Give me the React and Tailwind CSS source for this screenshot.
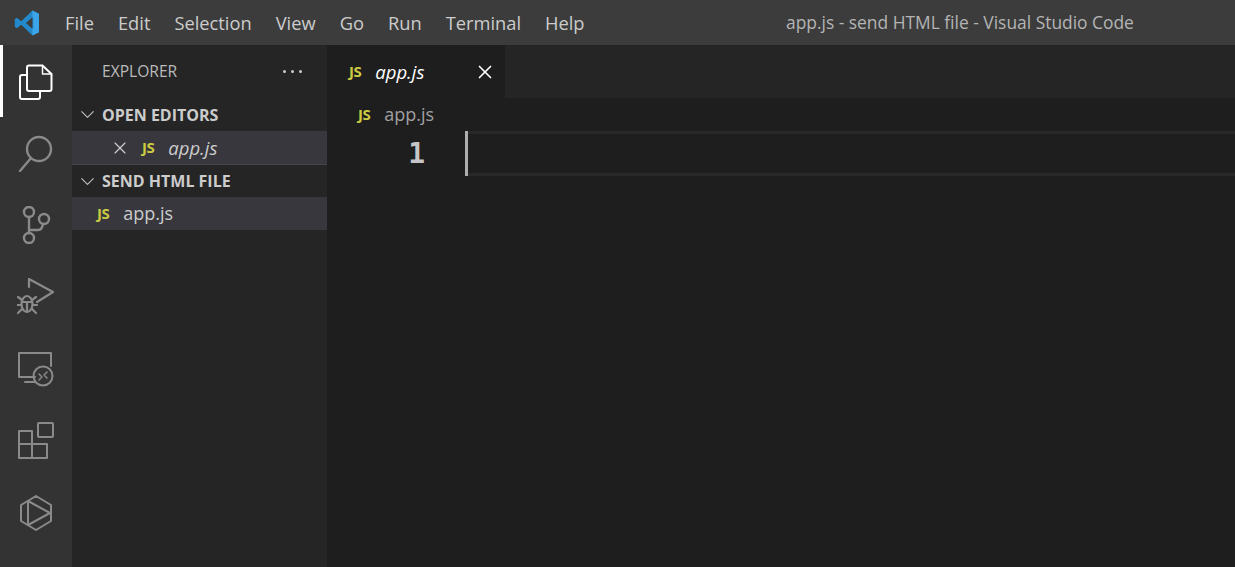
import { X, ChevronDown } from 'lucide-react';

const FONT = "font-['Open_Sans','Noto_Sans',sans-serif]";

function JsBadge({ className = '' }) {
  return <span className={`text-[15px] font-bold leading-none text-[#cbcb41] tracking-[-0.5px] ${className}`}>JS</span>;
}

function Logo() {
  return (
    <svg width="26" height="26" viewBox="0 0 100 100">
      <path d="M71 2 L96 14 V86 L71 98 L28 57 L11 70 L3 65 V35 L11 30 L28 43 Z M71 28 L46 50 L71 72 Z" fill="#2489ca" fillRule="evenodd" />
      <path d="M71 2 L96 14 V86 L71 98 Z M71 28 V72 L74 70 V30 Z" fill="#3ca5ea" fillRule="evenodd" />
    </svg>
  );
}

const stroke = { fill: 'none', strokeWidth: 2, strokeLinejoin: 'round', strokeLinecap: 'round' };

function FilesIcon() {
  return (
    <svg width="36" height="38" viewBox="0 0 36 38" stroke="#ffffff" {...stroke}>
      <path d="M11 3.5 H24.5 L33.5 12 V27 Q33.500 29 31.500 29 H11 Q9 29 9 27 V5.500 Q9 3.500 11 3.500 Z" />
      <path d="M24.500 3.500 V12 H33.500" strokeWidth="1.500" />
      <path d="M9 13 H4 Q2 13 2 15 V35 Q2 37 4 37 H20 Q22 37 22 35 V29" />
    </svg>
  );
}

function SearchIcon() {
  return (
    <svg width="36" height="38" viewBox="0 0 36 38" stroke="#8a8a8a" {...stroke} strokeWidth="2.400">
      <circle cx="21" cy="15" r="12" />
      <path d="M13 24 L2 37" />
    </svg>
  );
}

function BranchIcon() {
  return (
    <svg width="30" height="38" viewBox="0 0 30 38" stroke="#8a8a8a" {...stroke} strokeWidth="2.400">
      <circle cx="8" cy="6" r="5" />
      <circle cx="8" cy="32" r="5" />
      <circle cx="23" cy="13" r="5" />
      <path d="M8 11 V27 M8 24 H17 Q21 24 22 18" />
    </svg>
  );
}

function DebugIcon() {
  return (
    <svg width="38" height="38" viewBox="0 0 38 38" stroke="#8a8a8a" {...stroke} strokeWidth="2.200">
      <path d="M12 9 V1 L36 14 L20 24" />
      <ellipse cx="10" cy="26" rx="5.500" ry="8" />
      <path d="M5 24 H15 M10 24 V34 M1 19 L5 22 M19 19 L15 22 M0 27 H4 M16 27 H20 M1 35 L5 31 M19 35 L15 31" />
    </svg>
  );
}

function RemoteIcon() {
  return (
    <svg width="38" height="36" viewBox="0 0 38 36" stroke="#8a8a8a" {...stroke}>
      <path d="M18 26 H2 V2 H34 V15" />
      <path d="M8 31 H18" />
      <circle cx="26" cy="25" r="9.500" />
      <path d="M22 23 L25 26 L22 29 M30 21 L27 24 L30 27" strokeWidth="1.500" />
    </svg>
  );
}

function ExtensionsIcon() {
  return (
    <svg width="38" height="38" viewBox="0 0 38 38" stroke="#8a8a8a" {...stroke}>
      <path d="M2 9 H15 V36 H2 Z M2 22 H30 V36 H15" />
      <rect x="21" y="1" width="15" height="14" rx="1" />
    </svg>
  );
}

function HexIcon() {
  return (
    <svg width="34" height="36" viewBox="0 0 34 36" stroke="#8a8a8a" {...stroke}>
      <path d="M17 1 L32 10 V26 L17 35 L2 26 V10 Z" />
      <path d="M9 6 V30 L31 18 L9 6" />
    </svg>
  );
}

function MenuBar() {
  const items = ['File', 'Edit', 'Selection', 'View', 'Go', 'Run', 'Terminal', 'Help'];
  return (
    <div className="h-[45px] bg-[#3c3c3c] flex items-center shrink-0">
      <div className="w-[65px] pl-[14px] flex items-center"><Logo /></div>
      <div className="flex gap-[24px] text-[18.3px] text-[#cccccc] w-[721px]">
        {items.map(item => <span key={item}>{item}</span>)}
      </div>
      <span className="text-[17.4px] text-[#b4b4b4] whitespace-nowrap">app.js - send HTML file - Visual Studio Code</span>
    </div>
  );
}

function ActivityBar() {
  return (
    <div className="w-[72px] bg-[#333333] flex flex-col items-center shrink-0 relative">
      <div className="absolute left-0 top-0 w-[3px] h-[72px] bg-white" />
      <div className="h-[72px] flex items-center justify-center"><FilesIcon /></div>
      <div className="h-[72px] flex items-center justify-center"><SearchIcon /></div>
      <div className="h-[72px] flex items-center justify-center"><BranchIcon /></div>
      <div className="h-[72px] flex items-center justify-center"><DebugIcon /></div>
      <div className="h-[72px] flex items-center justify-center"><RemoteIcon /></div>
      <div className="h-[72px] flex items-center justify-center"><ExtensionsIcon /></div>
      <div className="h-[72px] flex items-center justify-center"><HexIcon /></div>
    </div>
  );
}

function Sidebar() {
  return (
    <div className="w-[255px] bg-[#252526] shrink-0">
      <div className="h-[53px] pl-[30px] pr-[25px] flex items-center justify-between">
        <span className="text-[15.6px] text-[#bbbbbb]">EXPLORER</span>
        <span className="flex gap-[5px]">
          <i className="w-[3px] h-[3px] rounded-full bg-[#cccccc]" />
          <i className="w-[3px] h-[3px] rounded-full bg-[#cccccc]" />
          <i className="w-[3px] h-[3px] rounded-full bg-[#cccccc]" />
        </span>
      </div>
      <div className="h-[33px] flex items-center pl-[4px] gap-[3px]">
        <ChevronDown size={23} strokeWidth={1.100} className="text-[#c5c5c5]" />
        <span className="text-[16px] font-bold text-[#cccccc]">OPEN EDITORS</span>
      </div>
      <div className="h-[34px] bg-[#37373d] flex items-center pl-[38px] border-b border-[#45454b]">
        <X size={20} strokeWidth={1.300} className="text-[#d4d4d4] shrink-0" />
        <JsBadge className="ml-[12px]" />
        <span className="ml-[14px] text-[18.500px] italic text-[#cccccc]">app.js</span>
      </div>
      <div className="h-[32px] flex items-center pl-[4px] gap-[3px]">
        <ChevronDown size={23} strokeWidth={1.100} className="text-[#c5c5c5]" />
        <span className="text-[16px] font-bold text-[#cccccc]">SEND HTML FILE</span>
      </div>
      <div className="h-[33px] bg-[#37373d] flex items-center pl-[25px]">
        <JsBadge />
        <span className="ml-[14px] text-[18px] text-[#cccccc]">app.js</span>
      </div>
    </div>
  );
}

function Editor() {
  return (
    <div className="flex-1 bg-[#1e1e1e] flex flex-col min-w-0">
      <div className="h-[53px] bg-[#252526] flex shrink-0">
        <div className="w-[178px] bg-[#1e1e1e] flex items-center pl-[22px]">
          <JsBadge />
          <span className="ml-[14px] text-[18.500px] italic text-white">app.js</span>
          <X size={22} strokeWidth={1.800} className="text-white ml-[50px]" />
        </div>
      </div>
      <div className="h-[33px] flex items-center pl-[31px] shrink-0">
        <JsBadge />
        <span className="ml-[14px] text-[18px] text-[#a0a0a0]">app.js</span>
      </div>
      <div className="flex h-[45px] shrink-0">
        <div className="w-[98px] text-right text-[28px] font-bold leading-[45px] text-[#c6c6c6] font-['DejaVu_Sans_Mono',monospace]">1</div>
        <div className="ml-[40px] flex-1 border-y-[3px] border-[#282828] relative">
          <div className="absolute left-0 -top-[3px] -bottom-[3px] w-[3px] bg-[#aeafad]" />
        </div>
      </div>
    </div>
  );
}

export default function App() {
  return (
    <div className={`w-[1235px] h-[567px] flex flex-col overflow-hidden ${FONT}`}>
      <MenuBar />
      <div className="flex flex-1 min-h-0">
        <ActivityBar />
        <Sidebar />
        <Editor />
      </div>
    </div>
  );
}
